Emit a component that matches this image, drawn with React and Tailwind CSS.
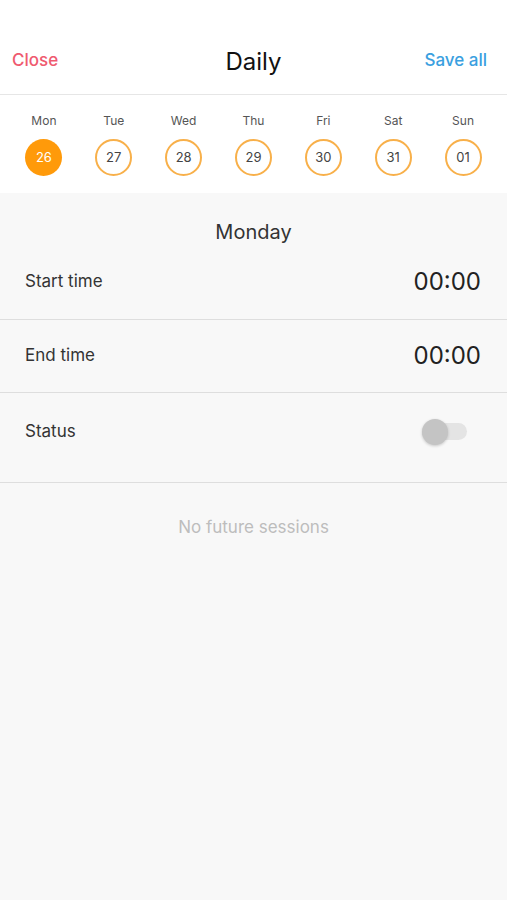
import React from "react";

const days = [
  { d: "Mon", n: "26", active: true },
  { d: "Tue", n: "27" },
  { d: "Wed", n: "28" },
  { d: "Thu", n: "29" },
  { d: "Fri", n: "30" },
  { d: "Sat", n: "31" },
  { d: "Sun", n: "01" },
];

export default function App() {
  return (
    <div className="w-[507px] h-[900px] flex flex-col bg-[#f8f8f8] font-['Inter',sans-serif] text-[#333]">
      <header className="h-[95px] bg-white border-b border-[#e6e6e6] flex items-end pb-[25px] px-3 relative">
        <button className="text-[17px] font-medium text-[#ef5a6f] leading-none">Close</button>
        <h1 className="absolute left-0 right-0 bottom-[20px] text-center text-[24px] text-[#111] leading-none pointer-events-none">
          Daily
        </h1>
        <button className="ml-auto mr-2 text-[17px] font-medium text-[#3a9fe0] leading-none">Save all</button>
      </header>

      <div className="bg-white grid grid-cols-7 px-[9px] pt-[18px] h-[98px]">
        {days.map((x) => (
          <div key={x.d} className="flex flex-col items-center">
            <span className="text-[12px] text-[#555] leading-[16px]">{x.d}</span>
            <span
              className={
                x.active
                  ? "mt-[10px] w-[37px] h-[37px] rounded-full bg-[#ff9a0a] text-white text-[13px] flex items-center justify-center"
                  : "mt-[10px] w-[37px] h-[37px] rounded-full border-2 border-[#f8b04a] text-[#444] text-[13px] flex items-center justify-center"
              }
            >
              {x.n}
            </span>
          </div>
        ))}
      </div>

      <div className="text-center text-[20px] text-[#333] pt-[24px] leading-[30px]">Monday</div>

      <div className="flex items-center justify-between pl-[25px] pr-[26px] h-[73px] pb-[2px] border-b border-[#dedede]">
        <span className="text-[17px] text-[#333]">Start time</span>
        <span className="text-[24px] text-[#222]">00:00</span>
      </div>
      <div className="flex items-center justify-between pl-[25px] pr-[26px] h-[73px] border-b border-[#dedede]">
        <span className="text-[17px] text-[#333]">End time</span>
        <span className="text-[24px] text-[#222]">00:00</span>
      </div>
      <div className="flex items-center justify-between pl-[25px] pr-[40px] h-[90px] pb-[12px] border-b border-[#dedede]">
        <span className="text-[17px] text-[#333]">Status</span>
        <div className="relative w-[45px] h-[26px] flex items-center">
          <div className="w-full h-[17px] rounded-full bg-[#e4e4e4]" />
          <div className="absolute left-0 top-0 w-[26px] h-[26px] rounded-full bg-[#c4c4c4] shadow-[0_1px_3px_rgba(0,0,0,0.2)]" />
        </div>
      </div>

      <div className="text-center text-[17px] text-[#bdbdbd] pt-[32px]">No future sessions</div>
    </div>
  );
}
